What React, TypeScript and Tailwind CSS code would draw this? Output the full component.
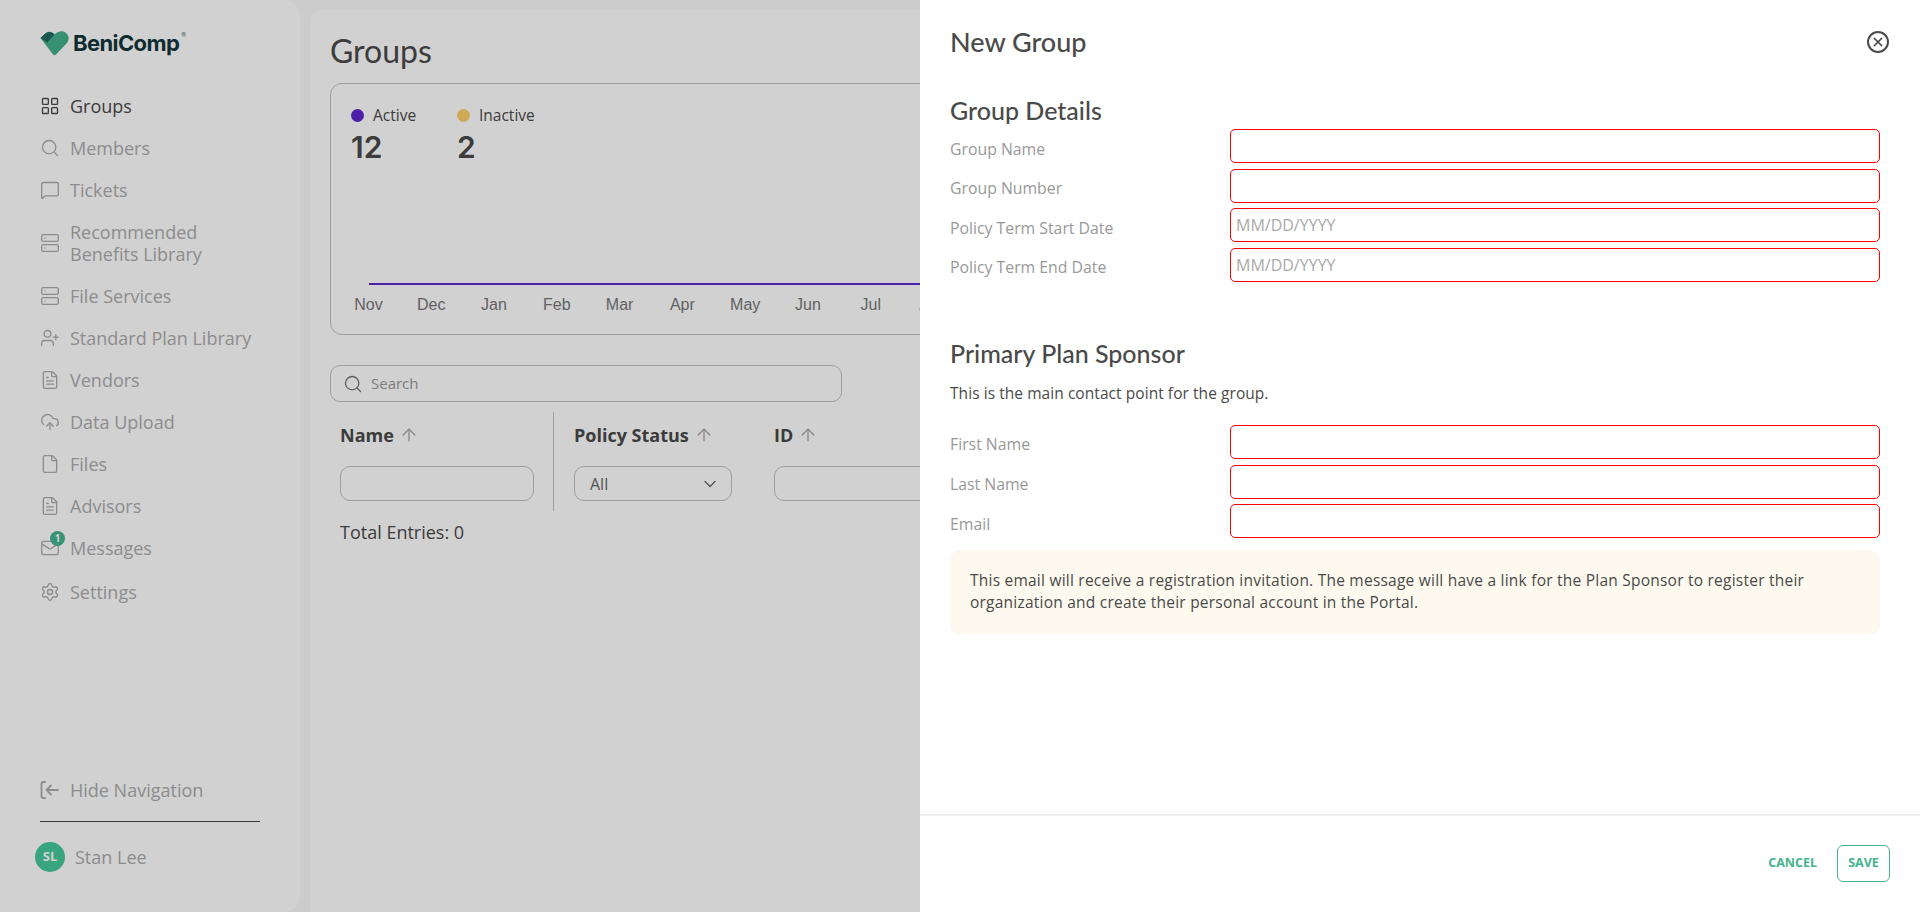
import { ArrowUp, ChevronDown, CloudUpload, File, FileText, LayoutGrid, Mail, MessageSquare, Search, Server, Settings, UserPlus, X } from 'lucide-react';
import type { ReactNode } from 'react';

const openSans = "font-['Open_Sans',sans-serif]";

const navItems = [
  { id: 'members', label: 'Members', icon: <Search size={24} strokeWidth={1.6} /> },
  { id: 'tickets', label: 'Tickets', icon: <MessageSquare size={24} strokeWidth={1.6} /> },
  { id: 'recommended', label: 'Recommended Benefits Library', icon: <Server size={24} strokeWidth={1.6} /> },
  { id: 'file-services', label: 'File Services', icon: <Server size={24} strokeWidth={1.6} /> },
  { id: 'standard', label: 'Standard Plan Library', icon: <UserPlus size={24} strokeWidth={1.6} /> },
  { id: 'vendors', label: 'Vendors', icon: <FileText size={24} strokeWidth={1.6} /> },
  { id: 'upload', label: 'Data Upload', icon: <CloudUpload size={24} strokeWidth={1.6} /> },
  { id: 'files', label: 'Files', icon: <File size={24} strokeWidth={1.6} /> },
  { id: 'advisors', label: 'Advisors', icon: <FileText size={24} strokeWidth={1.6} /> },
];

const months = ['Nov', 'Dec', 'Jan', 'Feb', 'Mar', 'Apr', 'May', 'Jun', 'Jul', 'Aug', 'Sep', 'Oct'];

function NavRow({ icon, label, active }: { icon: ReactNode; label: string; active?: boolean }) {
  return (
    <div className={`flex h-auto items-center gap-[10px] py-[10px] ${active ? 'text-[#4a4a4a]' : 'text-[#acacac]'}`}>
      <span className="flex h-[22px] w-5 shrink-0 items-center justify-center">{icon}</span>
      <span className="w-[190px] text-[18px] leading-[22px]">{label}</span>
    </div>
  );
}

function Logo() {
  return (
    <div className="flex items-center gap-[4px]">
      <svg width="29" height="25" viewBox="0 0 29 25">
        <path d="M0.5 7 L6 2 C 9 0 12 0.5 14.5 3.5 C 17 0.5 22 -1 25.5 1.5 C 29.5 4.5 29.5 9 26.5 12.5 L16 23.5 C 15 24.6 14 24.6 13 23.5 Z" fill="#45b08c" />
        <path d="M0.5 7 L6 2 C 9 0.2 12 0.5 14.5 3.5 L7.5 11 L8 12 Z" fill="#246a60" />
      </svg>
      <span className="flex items-start font-['Inter',sans-serif] text-[22px] font-bold leading-[26px] tracking-[-0.6px] text-[#12363a]">
        BeniComp
        <span className="mt-[2px] ml-[2px] text-[7px] leading-[8px] font-normal tracking-normal text-[#5f7d7d]">®</span>
      </span>
    </div>
  );
}

function Sidebar() {
  return (
    <aside className="flex h-full w-[300px] shrink-0 flex-col rounded-r-[16px] bg-white pl-[40px] pr-[40px]">
      <div className="mt-[30px]">
        <Logo />
      </div>
      <nav className="mt-[29px] flex flex-col">
        <NavRow active label="Groups" icon={<LayoutGrid size={24} strokeWidth={1.6} />} />
        {navItems.map((item) => (
          <NavRow key={item.id} label={item.label} icon={item.icon} />
        ))}
        <div className="relative">
          <NavRow label="Messages" icon={<Mail size={24} strokeWidth={1.6} />} />
          <span className="absolute left-[10px] top-[4px] flex h-[15px] w-[15px] items-center justify-center rounded-full bg-[#43b48e] text-[10px] font-bold text-white">
            1
          </span>
        </div>
        <div className="mt-[2px]">
          <NavRow label="Settings" icon={<Settings size={24} strokeWidth={1.6} />} />
        </div>
      </nav>
      <div className="mt-auto">
        <div className="flex items-center gap-[10px] text-[#acacac]">
          <svg width="20" height="20" viewBox="0 0 20 20" fill="none" stroke="currentColor" strokeWidth="1.8" strokeLinecap="round" strokeLinejoin="round">
            <path d="M5 2 H3 C2 2 1.5 2.6 1.5 3.5 V16.5 C1.5 17.4 2 18 3 18 H5" />
            <path d="M18 10 H7 M11 5.5 L6.5 10 L11 14.5" />
          </svg>
          <span className="text-[18px] leading-[22px]">Hide Navigation</span>
        </div>
        <div className="mt-[20px] h-px w-[220px] bg-[#4a4a4a]" />
        <div className="mb-[40px] mt-[20px] -ml-[5px] flex items-center gap-[10px]">
          <span className="flex h-[30px] w-[30px] items-center justify-center rounded-full bg-[#45c89d] text-[13px] font-bold text-white">
            SL
          </span>
          <span className="text-[18px] leading-[22px] text-[#acacac]">Stan Lee</span>
        </div>
      </div>
    </aside>
  );
}

function ColumnHead({ label }: { label: string }) {
  return (
    <div className="flex items-center gap-[5px]">
      <span className="text-[18px] font-bold leading-[24px] text-[#4a4a4a]">{label}</span>
      <ArrowUp size={20} strokeWidth={1.5} className="text-[#a0a0a0]" />
    </div>
  );
}

function GroupsPage() {
  return (
    <main className="ml-[10px] mt-[10px] min-w-0 flex-1 rounded-t-[12px] bg-white pl-[20px]">
      <h1 className="mt-[21px] font-['Lato',sans-serif] text-[32px] leading-[40px] text-[#4a4a4a]">Groups</h1>
      <section className="mt-[12px] h-[252px] w-[1300px] rounded-[12px] border border-[#c2c2c2] pl-[20px] pt-[20px]">
        <div className="flex">
          <div className="w-[106px] text-[#4a4a4a]">
            <div className="flex items-center gap-[9px]">
              <span className="size-[13px] rounded-full bg-[#5d28cc]" />
              <span className="text-[15.5px] leading-[22px]">Active</span>
            </div>
            <div className="mt-[3px] font-['Inter',sans-serif] text-[30px] font-semibold leading-[36px] text-[#4a4a4a]">12</div>
          </div>
          <div className="text-[#4a4a4a]">
            <div className="flex items-center gap-[9px]">
              <span className="size-[13px] rounded-full bg-[#fdcf6a]" />
              <span className="text-[15.5px] leading-[22px]">Inactive</span>
            </div>
            <div className="mt-[3px] font-['Inter',sans-serif] text-[30px] font-semibold leading-[36px] text-[#4a4a4a]">2</div>
          </div>
        </div>
        <div className="ml-[18px] mt-[118px] h-[2px] bg-[#5d28cc]" />
        <div className="-ml-[14px] mt-[10px] flex font-['Liberation_Sans',sans-serif] text-[16px] leading-[20px] text-[#777]">
          {months.map((month) => (
            <span key={month} className="w-[62.8px] shrink-0 text-center">
              {month}
            </span>
          ))}
        </div>
      </section>
      <div className="mt-[30px] flex h-[37px] w-[512px] items-center gap-[8px] rounded-[10px] border border-[#c2c2c2] pl-[12px] text-[#999]">
        <Search size={20} strokeWidth={1.6} className="text-[#777]" />
        <span className="text-[15px]">Search</span>
      </div>
      <div className="mt-[10px] flex">
        <div className="h-[99px] w-[224px] border-r border-[#c2c2c2] pl-[10px] pt-[11px]">
          <ColumnHead label="Name" />
          <div className="mt-[19px] h-[35px] w-[194px] rounded-[10px] border border-[#c2c2c2]" />
        </div>
        <div className="w-[220px] pl-[20px] pt-[11px]">
          <ColumnHead label="Policy Status" />
          <div className="mt-[19px] flex h-[35px] w-[158px] items-center justify-between rounded-[10px] border border-[#c2c2c2] pl-[15px] pr-[11px] text-[16px] text-[#666]">
            All
            <ChevronDown size={20} strokeWidth={1.5} />
          </div>
        </div>
        <div className="pt-[11px]">
          <ColumnHead label="ID" />
          <div className="mt-[19px] h-[35px] w-[196px] rounded-[10px] border border-[#c2c2c2]" />
        </div>
      </div>
      <p className="ml-[10px] mt-[9px] text-[18px] leading-[24px] text-[#4a4a4a]">Total Entries: 0</p>
    </main>
  );
}

function FormRow({ label, placeholder }: { label: string; placeholder?: string }) {
  return (
    <div className="grid h-[34px] grid-cols-[280px_650px] items-center">
      <label className="pt-[5px] text-[15.8px] leading-[22px] text-[#999]">{label}</label>
      <div className="h-[34px] rounded-[5px] border-[1.5px] border-[#f00] pl-[5px] text-[16px] leading-[32px] text-[#aaa]">
        {placeholder}
      </div>
    </div>
  );
}

function NewGroupDrawer() {
  return (
    <div className="absolute right-0 top-0 flex h-full w-[1000px] flex-col bg-white text-[#4a4a4a]">
      <div className="min-h-0 flex-1 pl-[30px] pr-[40px]">
        <div className="flex h-[84px] items-center justify-between">
          <h2 className="font-['Lato',sans-serif] text-[27px] font-medium leading-[32px]">New Group</h2>
          <span className="mr-[-9px] flex size-[22px] items-center justify-center rounded-full border-2 border-[#4a4a4a]">
            <X size={14} strokeWidth={3} />
          </span>
        </div>
        <h3 className="mt-[11px] font-['Lato',sans-serif] text-[25px] font-medium leading-[30px]">Group Details</h3>
        <div className="mt-[4px] flex flex-col gap-[5.67px]">
          <FormRow label="Group Name" />
          <FormRow label="Group Number" />
          <FormRow label="Policy Term Start Date" placeholder="MM/DD/YYYY" />
          <FormRow label="Policy Term End Date" placeholder="MM/DD/YYYY" />
        </div>
        <h3 className="mt-[56px] font-['Lato',sans-serif] text-[25px] font-medium leading-[30px]">Primary Plan Sponsor</h3>
        <p className="mt-[14px] text-[15.5px] leading-[22px] tracking-[0.06px]">This is the main contact point for the group.</p>
        <div className="mt-[21px] flex flex-col gap-[5.67px]">
          <FormRow label="First Name" />
          <FormRow label="Last Name" />
          <FormRow label="Email" />
        </div>
        <div className="mt-[12px] h-[85px] w-[930px] rounded-[10px] bg-[#fdf9ee] px-[20px] pt-[19px] text-[15.5px] leading-[22px] tracking-[0.23px]">
          This email will receive a registration invitation. The message will have a link for the Plan Sponsor to register their organization and create their personal account in the Portal.
        </div>
      </div>
      <div className="flex h-[98px] items-start justify-end gap-[20px] border-t-2 border-[#eee] pr-[30px] pt-[29px]">
        <button className="h-[36px] text-[12.5px] font-bold text-[#43b48e]">CANCEL</button>
        <button className="h-[37px] w-[53px] rounded-[6px] border border-[#43b48e] text-[12.5px] font-bold text-[#43b48e]">SAVE</button>
      </div>
    </div>
  );
}

export default function App() {
  return (
    <div className={`relative flex h-[912px] w-[1920px] overflow-hidden bg-[#f9f9f9] ${openSans}`}>
      <Sidebar />
      <GroupsPage />
      <div className="absolute inset-0 bg-black/18" />
      <NewGroupDrawer />
    </div>
  );
}
